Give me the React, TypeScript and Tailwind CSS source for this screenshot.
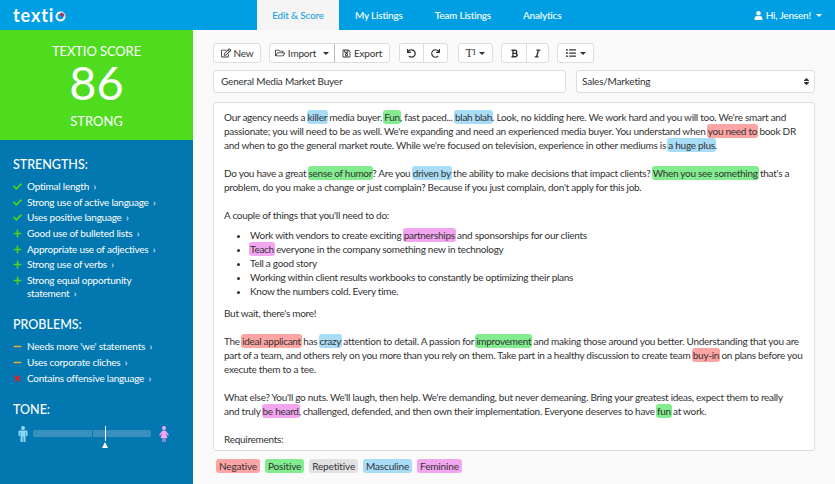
import { FaCheck, FaPlus, FaMinus, FaTimes, FaUser, FaRegEdit, FaRegFolderOpen, FaRegSave, FaUndo, FaRedo, FaBold, FaItalic, FaListUl, FaSort } from 'react-icons/fa'
import type { ReactNode } from 'react'

const Neg = ({ children }: { children: ReactNode }) => <span className="bg-[#fda4a4] rounded-[3px] py-[1px] px-[1px] -mx-[1px]">{children}</span>
const Pos = ({ children }: { children: ReactNode }) => <span className="bg-[#82ec8e] rounded-[3px] py-[1px] px-[1px] -mx-[1px]">{children}</span>
const Mas = ({ children }: { children: ReactNode }) => <span className="bg-[#a8dcf7] rounded-[3px] py-[1px] px-[1px] -mx-[1px]">{children}</span>
const Fem = ({ children }: { children: ReactNode }) => <span className="bg-[#f3a6f0] rounded-[3px] py-[1px] px-[1px] -mx-[1px]">{children}</span>

const Caret = () => <span className="inline-block ml-[4px] w-0 h-0 border-x-[3px] border-x-transparent border-t-[3px] border-t-[#333]" />

function Side({ icon, children }: { icon: ReactNode; children: ReactNode }) {
  return (
    <li className="flex leading-[12.5px] mb-[3.2px]">
      <span className="w-[14px] shrink-0 pt-[2px]">{icon}</span>
      <span>{children} <span className="ml-[2px]">›</span></span>
    </li>
  )
}

const check = <FaCheck className="text-[#4fd01f] text-[9px]" />
const plus = <FaPlus className="text-[#4fd01f] text-[9px]" />
const minus = <FaMinus className="text-[#f0a830] text-[9px]" />

export default function App() {
  return (
    <div className="w-[835px] h-[484px] overflow-hidden flex flex-col bg-[#fafafa] text-[#333] font-['Lato',sans-serif]">
      <header className="h-[30px] shrink-0 bg-[#009fe3] flex text-white text-[10px] tracking-[-0.2px] font-medium">
        <div className="w-[257px] pl-[13px] flex items-center text-[18px] leading-none font-bold tracking-[0.9px] pb-[1px]">
          texti
          <svg width="11" height="11" viewBox="0 0 11 11" className="ml-[1px] mt-[3px]">
            <circle cx="5.5" cy="5.5" r="4" fill="none" stroke="#fff" strokeWidth="2" />
            <path d="M5.5 1.5A4 4 0 0 1 9.5 5.5H5.5Z" fill="#b5305f" />
          </svg>
        </div>
        <div className="w-[82px] bg-[#f5f5f5] text-[#1c9fdc] flex items-center justify-center">Edit &amp; Score</div>
        <div className="flex items-center pl-[16px] gap-[32px]">
          <span>My Listings</span>
          <span>Team Listings</span>
          <span>Analytics</span>
        </div>
        <div className="ml-auto pr-[13px] flex items-center gap-[3px]">
          <FaUser className="text-[9px]" /> Hi, Jensen!
          <span className="inline-block ml-[2px] w-0 h-0 border-x-[3px] border-x-transparent border-t-[3px] border-t-white" />
        </div>
      </header>

      <div className="flex flex-1 min-h-0">
        <aside className="w-[193px] shrink-0 flex flex-col text-white">
          <div className="h-[110px] bg-[#4fdc1f] flex flex-col items-center pt-[13px]">
            <div className="text-[13px] leading-[16px] tracking-[-0.1px]">TEXTIO SCORE</div>
            <div className="text-[47px] leading-[47px] font-normal">86</div>
            <div className="text-[13px] leading-[16px] mt-[7px]">STRONG</div>
          </div>
          <div className="flex-1 bg-[#0277b0] pl-[13px] pt-[17px] text-[10px] tracking-[-0.22px]">
            <h3 className="text-[12.5px] tracking-normal leading-[16px] font-medium mb-[7px]">STRENGTHS:</h3>
            <ul>
              <Side icon={check}>Optimal length</Side>
              <Side icon={check}>Strong use of active language</Side>
              <Side icon={check}>Uses positive language</Side>
              <Side icon={plus}>Good use of bulleted lists</Side>
              <Side icon={plus}>Appropriate use of adjectives</Side>
              <Side icon={plus}>Strong use of verbs</Side>
              <Side icon={plus}>Strong equal opportunity<br />statement</Side>
            </ul>
            <h3 className="text-[12.5px] tracking-normal leading-[16px] font-medium mt-[18px] mb-[7px]">PROBLEMS:</h3>
            <ul>
              <Side icon={minus}>Needs more 'we' statements</Side>
              <Side icon={minus}>Uses corporate cliches</Side>
              <Side icon={<FaTimes className="text-[#f01818] text-[9px]" />}>Contains offensive language</Side>
            </ul>
            <h3 className="text-[12.5px] tracking-normal leading-[16px] font-medium mt-[18px]">TONE:</h3>
            <div className="flex items-start mt-[8px] ml-[5px]">
              <svg width="10" height="16" viewBox="0 0 10 16" fill="#8fd8f5">
                <circle cx="5" cy="2" r="2" />
                <path d="M1.5 4.5h7a1 1 0 0 1 1 1V10H8v-3.5h-.5V16H5.4v-5.5h-.8V16H2.500V6.500H2V10H.5V5.500a1 1 0 0 1 1-1z" />
              </svg>
              <div className="relative w-[118px] h-[7px] mt-[4px] ml-[5px] bg-[#3a90bd] rounded-[2px]">
                <div className="absolute left-[59px] top-0 w-[1px] h-[7px] bg-[#0277b0]" />
                <div className="absolute left-[72px] -top-[4px] w-[1px] h-[15px] bg-white" />
                <div className="absolute left-[69px] top-[12px] w-0 h-0 border-x-[3.5px] border-x-transparent border-b-[6px] border-b-white" />
              </div>
              <svg width="12" height="16" viewBox="0 0 12 16" fill="#f3a6f0" className="ml-[7px]">
                <circle cx="6" cy="2" r="2" />
                <path d="M4.500 4.500h3l3.500 4.500-1 .8-2-2.300L9.500 12H7.500v4H6.500v-4h-1v4H4.500v-4H2.500l1.500-4.500-2 2.300-1-.8z" />
              </svg>
            </div>
          </div>
        </aside>

        <main className="flex-1 pl-[20px] pr-[20px] pt-[13px] min-w-0">
          <div className="flex gap-[8px] h-[20px] text-[10px] tracking-[-0.2px]">
            <div className="w-[48px] flex items-center justify-center gap-[3px] border border-[#ddd] bg-white rounded-[3px]"><FaRegEdit className="text-[10px]" /> New</div>
            <div className="flex border border-[#ddd] bg-white rounded-[3px]">
              <div className="w-[65px] flex items-center justify-center gap-[3px] border-r border-[#bbb]"><FaRegFolderOpen className="text-[10px]" /> Import <Caret /></div>
              <div className="w-[54px] flex items-center justify-center gap-[3px]"><FaRegSave className="text-[9px]" /> Export</div>
            </div>
            <div className="flex ml-[1px] border border-[#ddd] bg-white rounded-[3px]">
              <div className="w-[24px] flex items-center justify-center border-r border-[#ddd]"><FaUndo className="text-[9px]" /></div>
              <div className="w-[23px] flex items-center justify-center"><FaRedo className="text-[9px]" /></div>
            </div>
            <div className="w-[35px] ml-[2px] flex items-center justify-center border border-[#ddd] bg-white rounded-[3px] font-['Liberation_Serif',serif] text-[12px]">T<span className="text-[9px]">I</span><Caret /></div>
            <div className="flex border border-[#ddd] bg-white rounded-[3px]">
              <div className="w-[25px] flex items-center justify-center border-r border-[#ddd]"><FaBold className="text-[9px]" /></div>
              <div className="w-[21px] flex items-center justify-center"><FaItalic className="text-[9px]" /></div>
            </div>
            <div className="w-[37px] flex items-center justify-center border border-[#ddd] bg-white rounded-[3px]"><FaListUl className="text-[10px]" /><Caret /></div>
          </div>

          <div className="flex gap-[10px] mt-[7px] text-[10px] tracking-[-0.2px]">
            <div className="w-[353px] h-[23px] px-[7px] flex items-center border border-[#ddd] bg-white rounded-[3px]">General Media Market Buyer</div>
            <div className="flex-1 h-[23px] pl-[5px] pr-[3px] flex items-center justify-between border border-[#ddd] bg-white rounded-[3px]">
              Sales/Marketing <FaSort className="text-[9px]" />
            </div>
          </div>

          <div className="mt-[9px] h-[349px] overflow-hidden border border-[#ddd] bg-white rounded-[3px] px-[10px] pt-[7px] text-[10px] tracking-[-0.28px] leading-[14px]">
            <p>Our agency needs a <Mas>killer</Mas> media buyer. <Pos>Fun</Pos>, fast paced... <Mas>blah blah</Mas>. Look, no kidding here. We work hard and you will too. We're smart and<br />passionate; you will need to be as well. We're expanding and need an experienced media buyer. You understand when <Neg>you need to</Neg> book DR<br />and when to go the general market route. While we're focused on television, experience in other mediums is <Mas>a huge plus</Mas>.</p>
            <p className="mt-[14px]">Do you have a great <Pos>sense of humor</Pos>? Are you <Mas>driven by</Mas> the ability to make decisions that impact clients? <Pos>When you see something</Pos> that's a<br />problem, do you make a change or just complain? Because if you just complain, don't apply for this job.</p>
            <p className="mt-[14px]">A couple of things that you'll need to do:</p>
            <ul className="mt-[6px] pl-[26px] list-disc">
              <li>Work with vendors to create exciting <Fem>partnerships</Fem> and sponsorships for our clients</li>
              <li><Fem>Teach</Fem> everyone in the company something new in technology</li>
              <li>Tell a good story</li>
              <li>Working within client results workbooks to constantly be optimizing their plans</li>
              <li>Know the numbers cold. Every time.</li>
            </ul>
            <p className="mt-[8px]">But wait, there's more!</p>
            <p className="mt-[14px]">The <Neg>ideal applicant</Neg> has <Mas>crazy</Mas> attention to detail. A passion for <Pos>improvement</Pos> and making those around you better. Understanding that you are<br />part of a team, and others rely on you more than you rely on them. Take part in a healthy discussion to create team <Neg>buy-in</Neg> on plans before you<br />execute them to a tee.</p>
            <p className="mt-[14px]">What else? You'll go nuts. We'll laugh, then help. We're demanding, but never demeaning. Bring your greatest ideas, expect them to really<br />and truly <Fem>be heard</Fem>, challenged, defended, and then own their implementation. Everyone deserves to have <Pos>fun</Pos> at work.</p>
            <p className="mt-[14px]">Requirements:</p>
          </div>

          <div className="flex gap-[5px] mt-[8px] ml-[3px] text-[10px] tracking-[-0.15px] leading-[14px]">
            <span className="px-[3px] bg-[#fda4a4] rounded-[3px]">Negative</span>
            <span className="px-[3px] bg-[#82ec8e] rounded-[3px]">Positive</span>
            <span className="px-[3px] bg-[#e2e2e2] rounded-[3px]">Repetitive</span>
            <span className="px-[3px] bg-[#a8dcf7] rounded-[3px]">Masculine</span>
            <span className="px-[3px] bg-[#f3a6f0] rounded-[3px]">Feminine</span>
          </div>
        </main>
      </div>
    </div>
  )
}
